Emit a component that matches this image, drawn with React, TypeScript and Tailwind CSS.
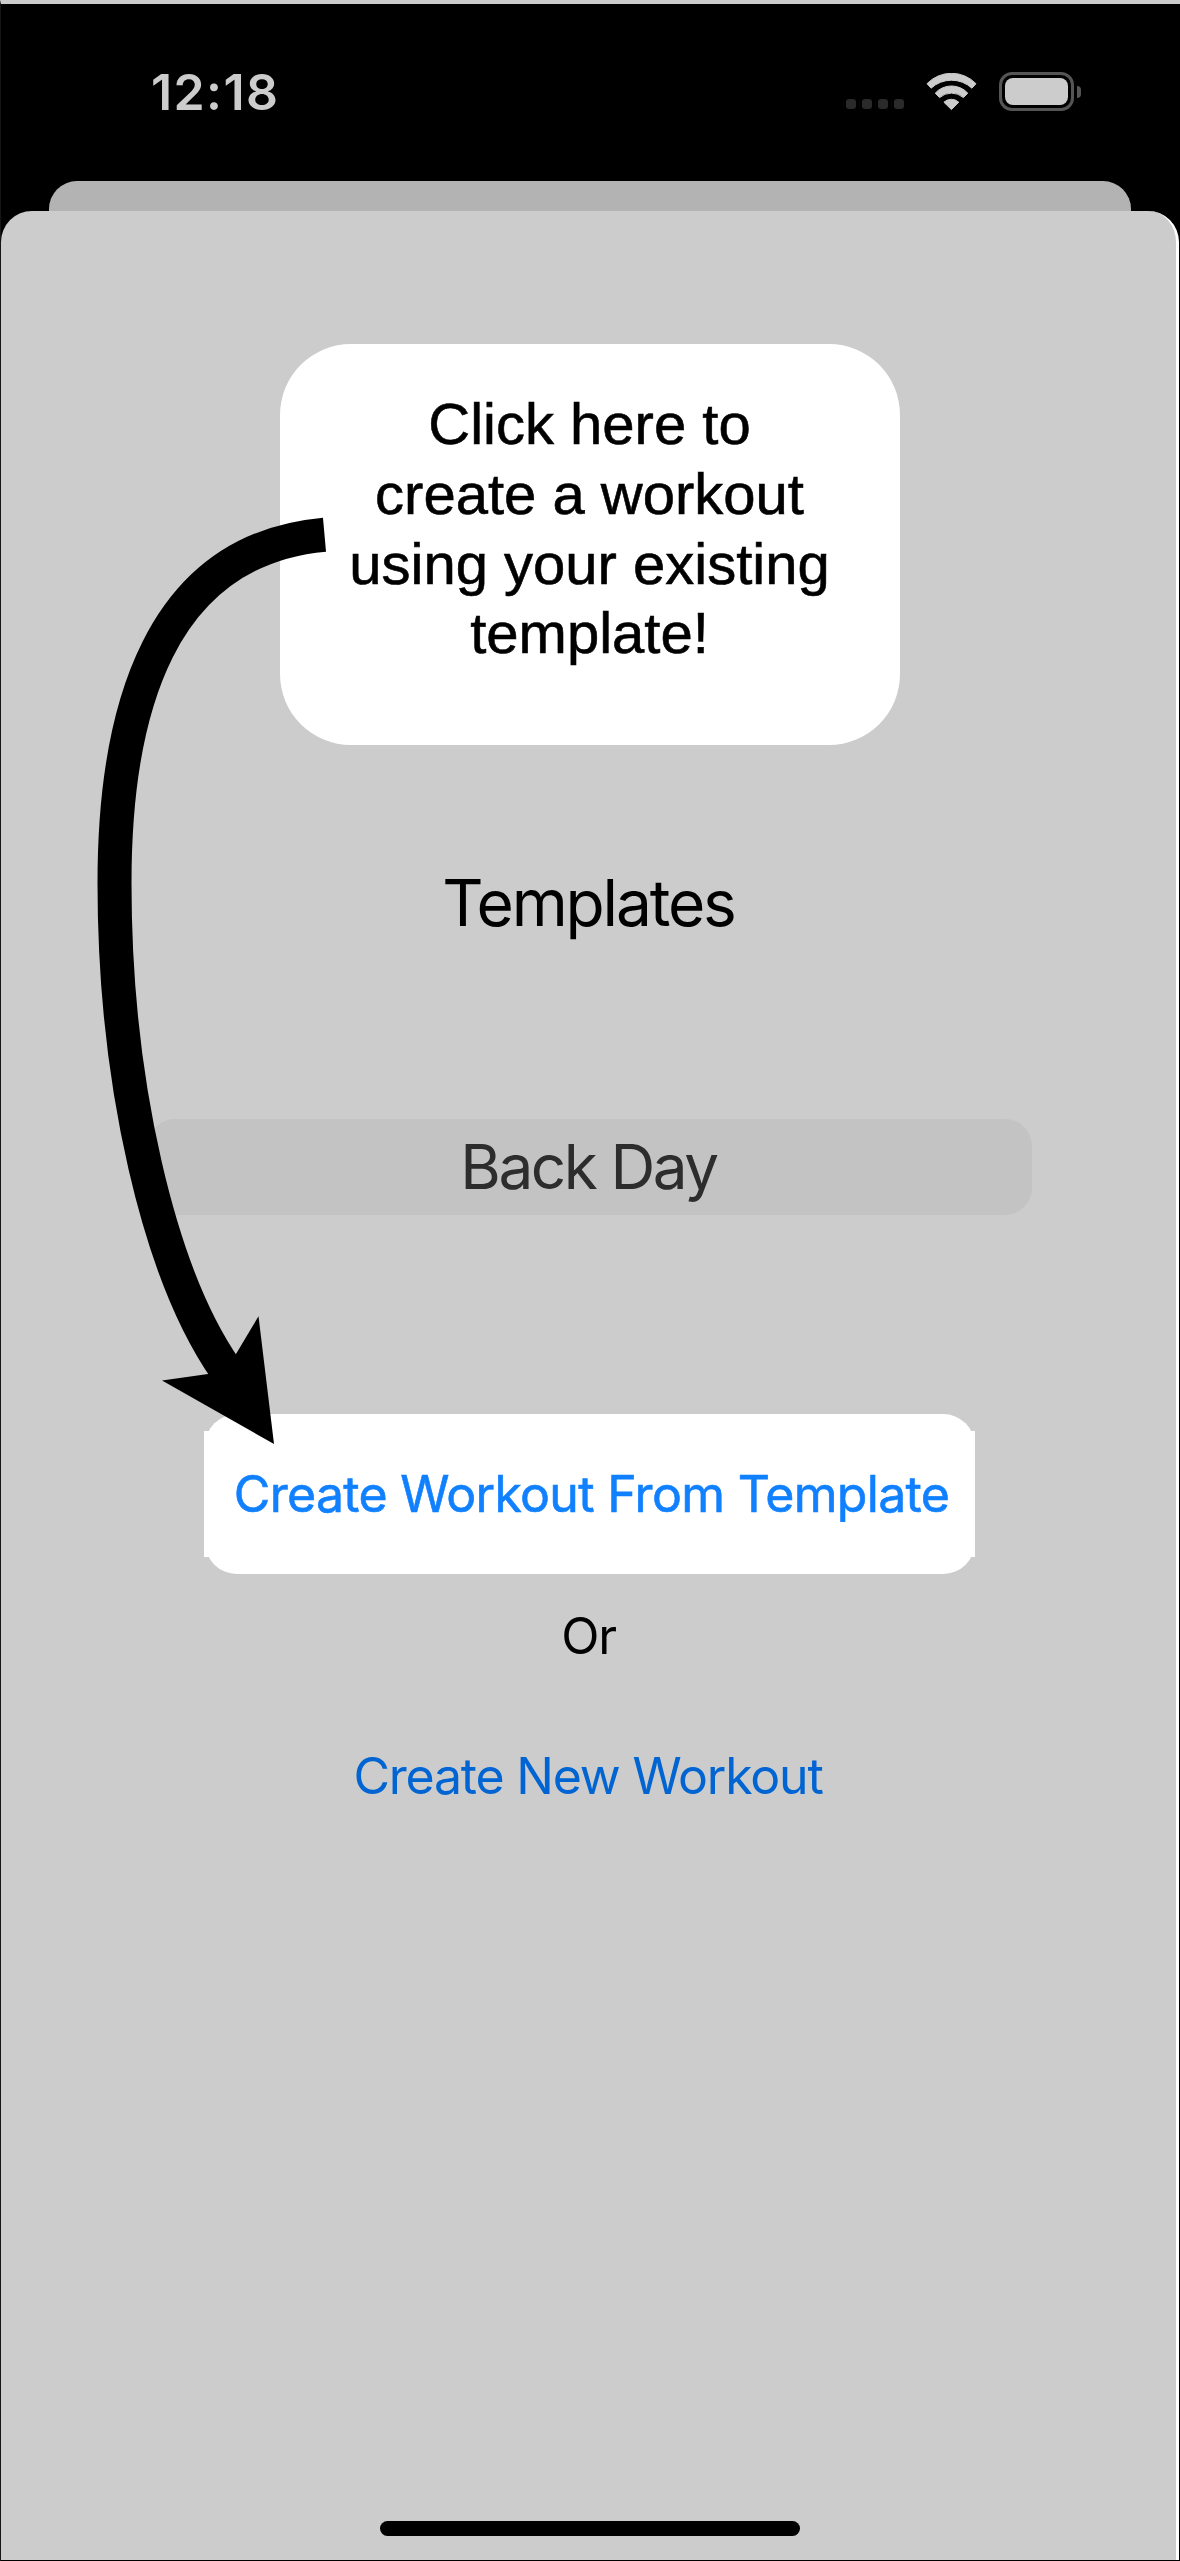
function SignalDots() {
  return (
    <div className="mt-[27px] flex gap-[6px]">
      <span className="size-[10px] rounded-[3px] bg-[#2a2a2a]" />
      <span className="size-[10px] rounded-[3px] bg-[#2a2a2a]" />
      <span className="size-[10px] rounded-[3px] bg-[#2a2a2a]" />
      <span className="size-[10px] rounded-[3px] bg-[#2a2a2a]" />
    </div>
  );
}

function WifiIcon() {
  return (
    <svg className="ml-[22px] h-[38px] w-[51px]" viewBox="0 0 51 38" fill="#cccccc" stroke="#cccccc" strokeWidth="1" strokeLinejoin="round">
      <path d="M1 10.7A34 34 0 0 1 50 10.7L45.9 15.2A30 30 0 0 0 5.1 15.2Z" />
      <path d="M9.2 20.2A22 22 0 0 1 41.8 20.2L37.4 24.6A18 18 0 0 0 13.6 24.6Z" />
      <path d="M17.9 29.2A11 11 0 0 1 32.8 29.2L25.4 36.6Z" />
    </svg>
  );
}

function BatteryIcon() {
  return (
    <div className="ml-[22px] flex items-center">
      <div className="h-[39px] w-[75px] rounded-[13px] border-[3px] border-[#555555] p-[3px]">
        <div className="h-[27px] w-[63px] rounded-[8px] bg-[#cccccc]" />
      </div>
      <div className="ml-[3px] h-[12px] w-[4px] rounded-r-[4px] bg-[#555555]" />
    </div>
  );
}

function StatusBar() {
  return (
    <header className="flex h-[177px] items-start justify-between pl-[150px] pr-[99px] pt-[65px]">
      <time className="mt-[-7px] text-[50px] font-semibold leading-[60px] tracking-[1.4px] text-[#cccccc]">12:18</time>
      <div className="flex items-start pt-[3px]">
        <div className="flex items-start">
          <SignalDots />
          <div className="flex pt-[1px]">
            <WifiIcon />
          </div>
        </div>
        <BatteryIcon />
      </div>
    </header>
  );
}

function PointerArrow() {
  return (
    <svg className="pointer-events-none absolute left-[90px] top-[500px] h-[950px] w-[250px]" viewBox="90 500 250 950">
      <path
        d="M324.5 534.7C159.5 549.6 114.5 710 114.5 883C114.5 1083 158.9 1273.8 226 1370"
        fill="none"
        stroke="#000"
        strokeWidth="34"
      />
      <path d="M274 1444L162 1380.4L208 1374L235.7 1354.6L258.5 1316.3Z" fill="#000" />
    </svg>
  );
}

export default function App() {
  return (
    <div className="relative flex h-[2561px] w-[1180px] flex-col overflow-hidden border-l border-t-4 border-l-[#151515] border-t-[#cccccc] bg-black font-['Inter',sans-serif]">
      <StatusBar />
      <div className="ml-[47.5px] mr-[49.5px] h-[30px] rounded-t-[28px] bg-[#b3b3b3]" />
      <main className="mb-px mr-px flex flex-1 flex-col items-center overflow-hidden rounded-t-[31px] border-r-[3px] border-white bg-[#cccccc] pl-[2px]">
        <section className="mt-[133px] h-[401px] w-[620px] rounded-[71px] bg-white pt-[45px] text-center font-['Liberation_Sans',Arial,sans-serif] text-[58px] leading-[69.8px] tracking-[0px] text-black [-webkit-text-stroke:0.6px_black]">
          <p>Click here to</p>
          <p>create a workout</p>
          <p>using your existing</p>
          <p>template!</p>
        </section>
        <h1 className="mt-[118px] pr-[2px] text-[64px] leading-[80px] tracking-[-2.15px] text-black">Templates</h1>
        <div className="mt-[176px] h-[96px] w-[884px] rounded-[27px] bg-[#c3c3c3] pr-[2px] text-center text-[62px] leading-[96px] tracking-[-2.4px] text-[#2d2d2d]">
          Back Day
        </div>
        <button className="relative mt-[199px] h-[160px] w-[770px] rounded-[32px] bg-white text-[#1080ff]">
          <span className="absolute -left-[0.5px] top-[17px] h-[126px] w-[771px] bg-white" />
          <span className="relative block whitespace-nowrap pl-[4px] text-center text-[50px] leading-[160px] tracking-[-0.7px] blur-[0.7px] [-webkit-text-stroke:0.6px_#1080ff]">
            Create Workout From Template
          </span>
        </button>
        <p className="mt-8 pr-[2px] text-[50px] leading-[60px] tracking-[-1.2px] text-black">Or</p>
        <button className="mt-20 pr-[3px] text-[50px] leading-[60px] tracking-[-1.2px] text-[#0064d2]">Create New Workout</button>
        <div className="mb-6 mt-auto h-[15px] w-[420px] rounded-full bg-black" />
      </main>
      <div className="absolute -left-px -top-1">
        <PointerArrow />
      </div>
    </div>
  );
}
